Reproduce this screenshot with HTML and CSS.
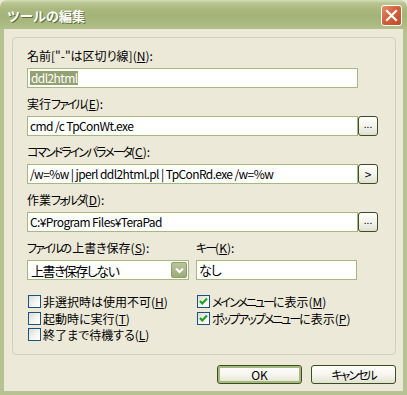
FILE: index.html
```html
<!DOCTYPE html>
<html lang="ja">
<head>
<meta charset="utf-8">
<title>ツールの編集</title>
<link rel="stylesheet" href="styles.css">
</head>
<body>
<div class="window">
  <div class="titlebar">
    <span class="title">ツールの編集</span>
    <div class="close">
      <svg width="13" height="13" viewBox="0 0 13 13"><path d="M2 2 L11 11 M11 2 L2 11" stroke="#fff" stroke-width="2.2" stroke-linecap="square"/></svg>
    </div>
  </div>
  <div class="frame">
    <div class="group">
      <div class="field">
        <div class="label">名前["-"は区切り線](<u>N</u>):</div>
        <div class="row"><div class="edit"><span class="sel">ddl2html</span></div></div>
      </div>
      <div class="field">
        <div class="label">実行<span class="kt">ファイル</span>(<u>E</u>):</div>
        <div class="row"><div class="edit">cmd /c TpConWt.exe</div><div class="mini">...</div></div>
      </div>
      <div class="field">
        <div class="label"><span class="kt">コマンドラインパラメータ</span>(<u>C</u>):</div>
        <div class="row"><div class="edit">/w=%w | jperl ddl2html.pl | TpConRd.exe /w=%w</div><div class="mini arrow">&gt;</div></div>
      </div>
      <div class="field">
        <div class="label">作業<span class="kt">フォルダ</span>(<u>D</u>):</div>
        <div class="row"><div class="edit">C:¥Program Files¥TeraPad</div><div class="mini">...</div></div>
      </div>
      <div class="pair">
        <div class="col">
          <div class="label"><span class="kt">ファイル</span>の上書き保存(<u>S</u>):</div>
          <div class="combo"><span class="combo-text">上書き保存しない</span>
            <div class="drop"><svg width="9" height="7" viewBox="0 0 9 7"><path d="M1 1.5 L4.5 5 L8 1.5" fill="none" stroke="#fff" stroke-width="2"/></svg></div>
          </div>
        </div>
        <div class="col">
          <div class="label"><span class="kt">キー</span>(<u>K</u>):</div>
          <div class="edit key">なし</div>
        </div>
      </div>
      <div class="checks">
        <div class="check"><span class="box"></span>非選択時は使用不可(<u>H</u>)</div>
        <div class="check"><span class="box on"><svg width="11" height="11" viewBox="0 0 11 11"><path d="M2 5 L4.3 7.5 L9 2.5" fill="none" stroke="#21a121" stroke-width="2.2"/></svg></span><span class="kt">メインメニュー</span>に表示(<u>M</u>)</div>
        <div class="check"><span class="box"></span>起動時に実行(<u>T</u>)</div>
        <div class="check"><span class="box on"><svg width="11" height="11" viewBox="0 0 11 11"><path d="M2 5 L4.3 7.5 L9 2.5" fill="none" stroke="#21a121" stroke-width="2.2"/></svg></span><span class="kt">ポップアップメニュー</span>に表示(<u>P</u>)</div>
        <div class="check"><span class="box"></span>終了まで待機する(<u>L</u>)</div>
      </div>
    </div>
    <div class="buttons">
      <div class="btn default">OK</div>
      <div class="btn"><span class="kt">キャンセル</span></div>
    </div>
  </div>
</div>
</body>
</html>
```

FILE: styles.css
```css
* { box-sizing: border-box; }
html, body { margin: 0; padding: 0; }
body {
  width: 407px;
  height: 395px;
  font-family: "Noto Sans CJK JP", "Noto Sans", sans-serif;
  font-size: 12px;
  font-feature-settings: "palt";
  color: #000;
  background: #ece9d8;
}
.kt { letter-spacing: -2px; }
.window { width: 407px; height: 395px; display: flex; flex-direction: column; }
.titlebar {
  height: 29px;
  flex: none;
  display: flex;
  align-items: center;
  justify-content: space-between;
  padding: 0 5px 0 7px;
  border-radius: 7px 7px 0 0;
  background: linear-gradient(to bottom, #d5ddb6 0, #bac695 3px, #aab87e 9px, #a5b379 16px, #abb982 24px, #b3c08b 29px);
}
.title {
  color: #fff;
  font-weight: bold;
  font-size: 13px;
  font-feature-settings: normal;
  text-shadow: 1px 1px 0 #5d6a3a;
  margin-top: 1px;
}
.close {
  width: 21px;
  height: 21px;
  border: 1px solid #fff;
  border-radius: 3px;
  background: linear-gradient(135deg, #e58c6a 0, #d3603c 45%, #c04a27 100%);
  display: flex;
  align-items: center;
  justify-content: center;
  margin-top: 1px;
}
.close svg { display: block; }
.frame {
  flex: 1;
  border: 4px solid #b6c292;
  border-top: 0;
  padding: 8px 0 0 8px;
  background: #ece9d8;
}
.group {
  width: 384px;
  height: 318px;
  border: 1px solid #d0d0bf;
  border-radius: 4px;
  padding: 11px 0 0 14px;
}
.label { height: 14px; line-height: 14px; margin-bottom: 5px; white-space: nowrap; }
.label u, .check u { text-decoration: underline; }
.field { margin-bottom: 9px; }
.row { display: flex; }
.edit {
  width: 331px;
  height: 20px;
  border: 1px solid #a4b97f;
  background: #fff;
  padding: 0 2px;
  line-height: 18px;
  white-space: nowrap;
  overflow: hidden;
  font-size: 12px;
  letter-spacing: -0.6px;
}
.sel { background: #93a070; color: #fff; padding: 0 1px; display: inline-block; line-height: 14px; }
.mini {
  width: 20px;
  height: 20px;
  border: 1px solid #37501f;
  border-radius: 3px;
  background: linear-gradient(to bottom, #ffffff 0, #f4f3ec 50%, #e2e0d1 100%);
  font-size: 10px;
  line-height: 14px;
  text-align: center;
}
.mini.arrow { font-size: 12px; line-height: 17px; }
.pair { display: flex; gap: 7px; }
.combo {
  width: 162px;
  height: 20px;
  border: 1px solid #a4b97f;
  background: #fff;
  display: flex;
  align-items: center;
  justify-content: space-between;
  padding: 1px 1px 1px 3px;
  font-size: 13px;
  letter-spacing: -1.5px;
}
.drop {
  width: 16px;
  height: 16px;
  border-radius: 2px;
  background: linear-gradient(to bottom, #b9c49b 0, #9cab78 100%);
  border: 1px solid #8e9d6b;
  display: flex;
  align-items: center;
  justify-content: center;
}
.key { width: 161px; font-size: 13px; letter-spacing: -1px; }
.checks {
  margin-top: 15px;
  margin-left: 1px;
  display: grid;
  grid-template-columns: 169px auto;
  grid-auto-rows: 16.5px;
}
.check { display: flex; align-items: flex-start; white-space: nowrap; line-height: 13px; font-size: 12px; }
.box {
  width: 13px;
  height: 13px;
  border: 1px solid #1c5180;
  background: linear-gradient(135deg, #dcdcd5 0, #f6f6f3 60%, #ffffff 100%);
  margin-right: 2px;
  flex: none;
  display: flex;
  align-items: center;
  justify-content: center;
}
.buttons {
  display: flex;
  gap: 9px;
  margin: 10px 0 0 205px;
}
.btn {
  width: 85px;
  height: 19px;
  border: 1px solid #37501f;
  border-radius: 3px;
  background: linear-gradient(to bottom, #ffffff 0, #f5f4ec 55%, #e3e1d2 100%);
  display: flex;
  align-items: center;
  justify-content: center;
  font-size: 12px;
}
.btn.default { box-shadow: inset 0 0 0 2px #a8b77b; }
```
